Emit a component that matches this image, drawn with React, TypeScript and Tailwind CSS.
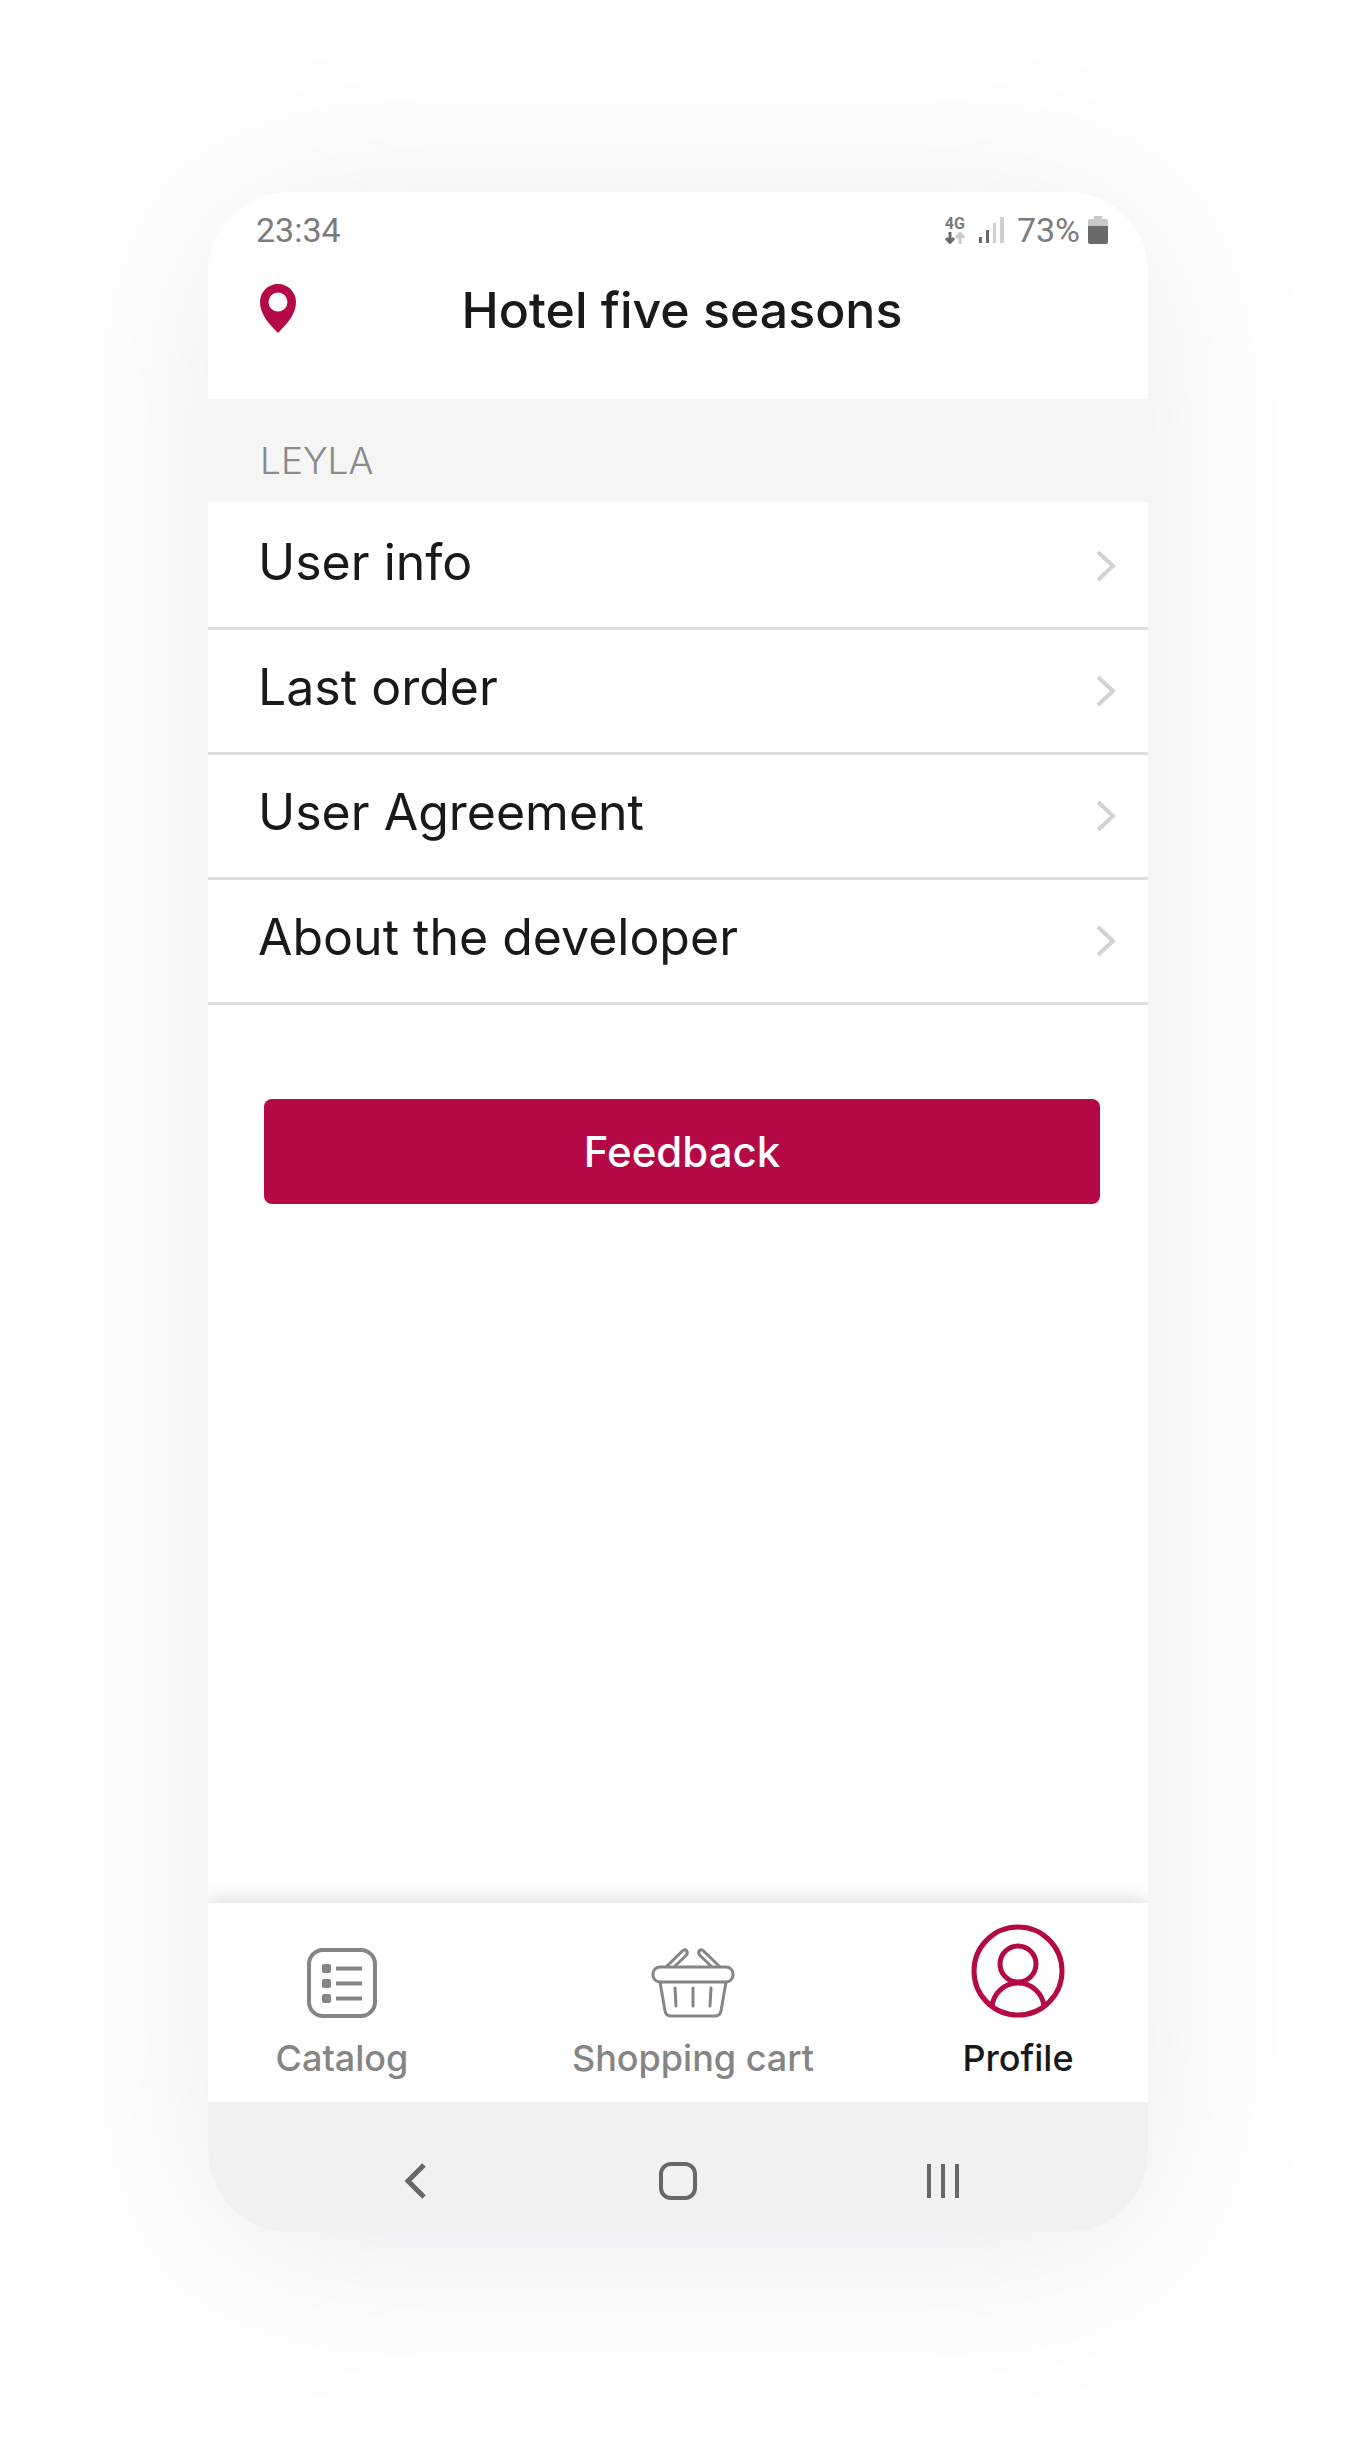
import { useState } from "react";
import type { ReactElement } from "react";

type TabId = "catalog" | "cart" | "profile";

const MENU_ITEMS = ["User info", "Last order", "User Agreement", "About the developer"];

function StatusBar(): ReactElement {
	return (
		<div className="flex h-[76px] items-center justify-between pl-12 pr-10 font-['Roboto',sans-serif] text-[34px] leading-[36px] text-[#7b7b7b]">
			<span>23:34</span>
			<div className="flex items-center">
				<div className="flex w-6 flex-col items-center">
					<span className="text-[16px] font-bold leading-[16px]">4G</span>
					<svg className="h-3 w-5" fill="none" strokeWidth="3" viewBox="0 0 20 12">
						<path d="M5 0v10M1 6l4 4.500 4-4.500" stroke="#6b6b6b" />
						<path d="M15 12V2M11 6l4-4.500 4 4.500" stroke="#c9c9c9" />
					</svg>
				</div>
				<svg className="ml-3 h-7 w-[26px]" viewBox="0 0 26 28">
					<path d="M0 21h3v6H0zM7 14h3v13H7z" fill="#6b6b6b" />
					<path d="M14 7h3v20h-3zM21 1h4v26h-4z" fill="#cfcfcf" />
				</svg>
				<span className="ml-3">73%</span>
				<svg className="ml-2 h-7 w-5" viewBox="0 0 20 28">
					<path d="M6 0h8v3h4q2 0 2 2v5H0V5q0-2 2-2h4z" fill="#c9c9c9" />
					<path d="M0 10h20v16q0 2-2 2H2q-2 0-2-2z" fill="#6b6b6b" />
				</svg>
			</div>
		</div>
	);
}

function Header(): ReactElement {
	return (
		<header className="grid h-[131px] grid-cols-[44px_1fr_36px] items-start px-12 pt-2">
			<button aria-label="Choose location" className="flex h-[66px] items-center justify-center" type="button">
				<svg className="h-[50px] w-[38px]" viewBox="0 0 38 50">
					<path
						d="M19 0C9 0 1 8 1 18c0 12 9 22 18 31 9-9 18-19 18-31C37 8 29 0 19 0Zm0 27.500a9.500 9.500 0 1 1 0-19 9.500 9.500 0 0 1 0 19Z"
						fill="#b50846"
						fillRule="evenodd"
					/>
				</svg>
			</button>
			<h1 className="text-center text-[50px] font-medium leading-[68px] text-[#181a1a]">
				Hotel five seasons
			</h1>
		</header>
	);
}

function MenuRow({ label }: { label: string }): ReactElement {
	return (
		<li className="border-b-3 border-[#dedede]">
			<a className="flex h-[122px] items-center justify-between pl-[50px] pr-8" href="#">
				<span className="pb-2 text-[50px] leading-[60px]">{label}</span>
				<svg className="h-8 w-5" fill="none" viewBox="0 0 20 32">
					<path d="M2 2l15 14L2 30" stroke="#d2d2d2" strokeWidth="4" />
				</svg>
			</a>
		</li>
	);
}

function CatalogIcon(): ReactElement {
	return (
		<svg className="h-[70px] w-[70px]" fill="none" stroke="currentColor" strokeWidth="4" viewBox="0 0 70 70">
			<rect height="66" rx="14" width="66" x="2" y="2" />
			<path d="M29 20.500h26M29 35.500h26M29 50.500h26" />
			<g fill="currentColor" stroke="none">
				<rect height="9" rx="2" width="9" x="15" y="16" />
				<rect height="9" rx="2" width="9" x="15" y="31" />
				<rect height="9" rx="2" width="9" x="15" y="46" />
			</g>
		</svg>
	);
}

function CartIcon(): ReactElement {
	return (
		<svg
			className="h-[70px] w-[84px]"
			fill="none"
			stroke="currentColor"
			strokeLinecap="round"
			strokeWidth="3"
			viewBox="0 0 84 70"
		>
			<rect height="15" rx="7" width="80" x="2" y="19" />
			<path d="M9 34l5 29q1 5 6 5h44q5 0 6-5l5-29" />
			<path d="M16 18L32 2.500q3-2 4 1 1 2-1 4L24 18M68 18L52 2.500q-3-2-4 1-1 2 1 4L60 18" />
			<path d="M24 40l1 18M42 40v18M60 40l-1 18" />
		</svg>
	);
}

function ProfileIcon(): ReactElement {
	return (
		<svg className="h-[94px] w-[94px]" fill="none" stroke="#b50846" strokeWidth="5" viewBox="0 0 94 94">
			<circle cx="47" cy="47" r="44" />
			<circle cx="47" cy="40" r="18" />
			<path d="M21 82a26.200 26.200 0 0 1 52 0" />
		</svg>
	);
}

type TabButtonProps = {
	label: string;
	active: boolean;
	icon: ReactElement;
	onSelect: () => void;
};

function TabButton({ label, active, icon, onSelect }: TabButtonProps): ReactElement {
	return (
		<button
			aria-current={active ? "page" : undefined}
			className={`flex flex-col items-center justify-end gap-4 ${active ? "text-[#181a1a]" : "text-[#858585]"}`}
			type="button"
			onClick={onSelect}
		>
			{icon}
			<span className="text-[36px] font-medium leading-[48px]">{label}</span>
		</button>
	);
}

function SystemBar(): ReactElement {
	return (
		<div className="grid h-[130px] grid-cols-3 items-center bg-[#f1f1f1] px-[74px] pt-8 pb-1 text-[#676767]">
			<button aria-label="Back" className="flex justify-center" type="button">
				<svg className="h-10 w-10" fill="none" stroke="currentColor" strokeWidth="5" viewBox="0 0 40 40">
					<path d="M30 4L14 20l16 16" />
				</svg>
			</button>
			<button aria-label="Home" className="flex justify-center" type="button">
				<svg className="h-10 w-10" fill="none" stroke="currentColor" strokeWidth="4" viewBox="0 0 40 40">
					<rect height="34" rx="10" width="34" x="3" y="3" />
				</svg>
			</button>
			<button aria-label="Recent apps" className="flex justify-center" type="button">
				<svg className="h-10 w-10" fill="none" stroke="currentColor" strokeWidth="4" viewBox="0 0 40 40">
					<path d="M7 3v34M21 3v34M35 3v34" />
				</svg>
			</button>
		</div>
	);
}

export default function App(): ReactElement {
	const [tab, setTab] = useState<TabId>("profile");

	return (
		<div className="flex min-h-screen flex-col overflow-hidden bg-white px-[208px] pt-48 pb-56 font-['Inter',sans-serif] text-[#181a1a]">
			<div className="flex flex-1 flex-col overflow-hidden rounded-[80px] bg-white shadow-[0_16px_180px_rgba(40,65,100,0.11)]">
				<StatusBar />
				<Header />
				<main className="flex flex-1 flex-col">
					<h2 className="h-[103px] bg-[#f5f5f5] px-[52px] pt-10 text-[37px] font-light leading-[44px] text-[#8a8a8a]">
						LEYLA
					</h2>
					<ul className="pt-[3px]">
						{MENU_ITEMS.map((label) => (
							<MenuRow key={label} label={label} />
						))}
					</ul>
					<button
						className="mx-14 mr-12 mt-[94px] h-[105px] rounded-lg bg-[#b50846] text-[42px] font-medium leading-[48px] text-white"
						type="button"
					>
						Feedback
					</button>
				</main>
				<nav className="grid h-[199px] grid-cols-[268fr_434fr_216fr] bg-white pr-[22px] pb-5 shadow-[0_-4px_18px_rgba(0,0,0,0.14)]">
					<TabButton
						active={tab === "catalog"}
						icon={<CatalogIcon />}
						label="Catalog"
						onSelect={() => setTab("catalog")}
					/>
					<TabButton
						active={tab === "cart"}
						icon={<CartIcon />}
						label="Shopping cart"
						onSelect={() => setTab("cart")}
					/>
					<TabButton
						active={tab === "profile"}
						icon={<ProfileIcon />}
						label="Profile"
						onSelect={() => setTab("profile")}
					/>
				</nav>
				<SystemBar />
			</div>
		</div>
	);
}
